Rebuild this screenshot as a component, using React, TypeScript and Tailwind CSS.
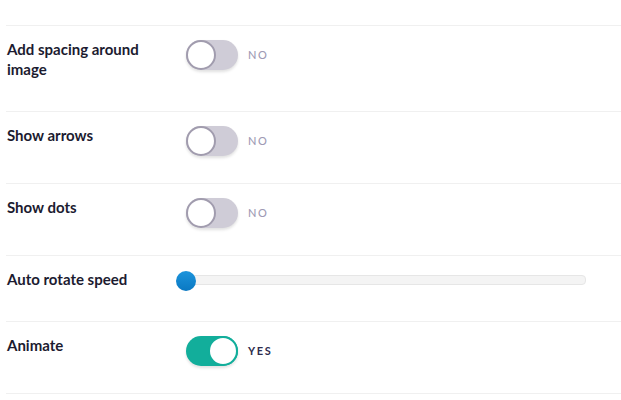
import { useState } from 'react';

interface ToggleProps {
  on: boolean;
  onChange: (v: boolean) => void;
}

function Toggle({ on, onChange }: ToggleProps) {
  return (
    <div className="ml-[10px] flex items-center gap-[10px]">
      <button
        type="button"
        onClick={() => onChange(!on)}
        className={`relative h-[30px] w-[52px] rounded-full shadow-[0_2px_3px_rgba(0,0,0,0.12)] ${
          on ? 'bg-[#12ae9b]' : 'bg-[#cfccd7]'
        }`}
      >
        <span
          className={`absolute top-0 h-[30px] w-[30px] rounded-full bg-white ${
            on
              ? 'right-0 border-[2px] border-[#12ae9b]'
              : 'left-0 border-[2px] border-[#a19cae]'
          }`}
        />
      </button>
      <span
        className={`text-[11px] tracking-[1.6px] ${
          on ? 'font-bold text-[#2e2c4d]' : 'font-medium text-[#9e9ab4]'
        }`}
      >
        {on ? 'YES' : 'NO'}
      </span>
    </div>
  );
}

function Row({ label, height, children }: { label: string; height: string; children: React.ReactNode }) {
  return (
    <div className={`flex items-start border-t border-[#f0f0f0] pt-[14px] ${height}`}>
      <div className="-mt-px w-[170px] shrink-0 pl-px pr-[20px] text-[15px] leading-[20px] font-bold text-[#1c1b30]">
        {label}
      </div>
      <div className="flex-1">{children}</div>
    </div>
  );
}

export default function App() {
  const [spacing, setSpacing] = useState(false);
  const [arrows, setArrows] = useState(false);
  const [dots, setDots] = useState(false);
  const [animate, setAnimate] = useState(true);

  return (
    <div className="h-[400px] w-[621px] bg-white pl-[6px] pt-[25px]" style={{ fontFamily: 'Lato, "Noto Sans", sans-serif' }}>
      <Row label="Add spacing around image" height="h-[86px]">
        <Toggle on={spacing} onChange={setSpacing} />
      </Row>
      <Row label="Show arrows" height="h-[72px]">
        <Toggle on={arrows} onChange={setArrows} />
      </Row>
      <Row label="Show dots" height="h-[72px]">
        <Toggle on={dots} onChange={setDots} />
      </Row>
      <Row label="Auto rotate speed" height="h-[66px]">
        <div className="relative mr-[35px] h-[20px]">
          <div className="absolute left-px right-0 top-[5px] h-[10px] rounded-[4px] border border-[#e6e6e6] bg-[#f4f4f4]" />
          <div className="absolute left-0 top-px h-[20px] w-[20px] rounded-full bg-[linear-gradient(180deg,#1c94dc,#0a78c2)]" />
        </div>
      </Row>
      <div className="border-b border-[#f0f0f0]">
        <Row label="Animate" height="h-[72px]">
          <Toggle on={animate} onChange={setAnimate} />
        </Row>
      </div>
    </div>
  );
}
